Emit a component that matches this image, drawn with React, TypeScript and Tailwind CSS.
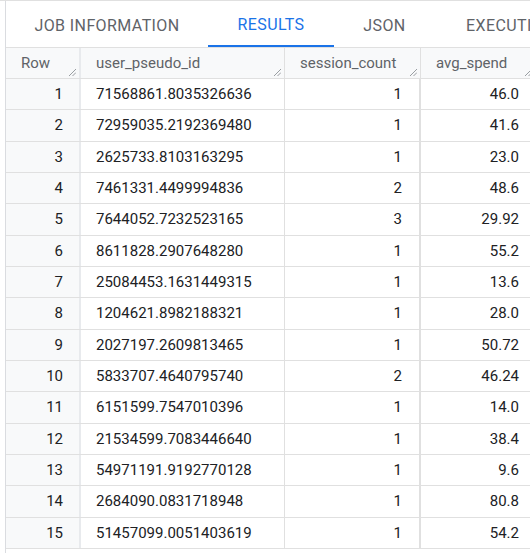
import React from "react";

const rows: [number, string, number, string][] = [
  [1, "71568861.8035326636", 1, "46.0"],
  [2, "72959035.2192369480", 1, "41.6"],
  [3, "2625733.8103163295", 1, "23.0"],
  [4, "7461331.4499994836", 2, "48.6"],
  [5, "7644052.7232523165", 3, "29.92"],
  [6, "8611828.2907648280", 1, "55.2"],
  [7, "25084453.1631449315", 1, "13.6"],
  [8, "1204621.8982188321", 1, "28.0"],
  [9, "2027197.2609813465", 1, "50.72"],
  [10, "5833707.4640795740", 2, "46.24"],
  [11, "6151599.7547010396", 1, "14.0"],
  [12, "21534599.7083446640", 1, "38.4"],
  [13, "54971191.9192770128", 1, "9.6"],
  [14, "2684090.0831718948", 1, "80.8"],
  [15, "51457099.0051403619", 1, "54.2"],
];

function Grip() {
  return (
    <svg
      className="absolute right-[3px] bottom-[2px]"
      width="8"
      height="8"
      viewBox="0 0 8 8"
    >
      <line x1="8" y1="1" x2="1" y2="8" stroke="#80868b" strokeWidth="0.8" />
      <line x1="8" y1="4.5" x2="4.5" y2="8" stroke="#80868b" strokeWidth="0.8" />
    </svg>
  );
}

export default function App() {
  return (
    <div
      className="w-[530px] h-[553px] overflow-hidden bg-white border-t border-[#e0e0e0]"
      style={{ fontFamily: "Roboto, 'Liberation Sans', sans-serif" }}
    >
      <div className="ml-[5px] h-full border-l border-[#dadce0]">
        {/* Tabs */}
        <div className="flex h-[46px] text-[16px] font-normal tracking-[0.4px] whitespace-nowrap">
          <div className="w-[202px] shrink-0 pt-[3px] flex items-center justify-center text-[#5f6368]">
            JOB INFORMATION
          </div>
          <div className="w-[126px] shrink-0 pt-[3px] flex items-center justify-center text-[#1a73e8] border-b-2 border-[#1a73e8]">
            RESULTS
          </div>
          <div className="w-[101px] shrink-0 pt-[3px] flex items-center justify-center text-[#5f6368]">
            JSON
          </div>
          <div className="shrink-0 pl-[31px] pt-[3px] flex items-center text-[#5f6368]">
            EXECUTION DETAILS
          </div>
        </div>
        {/* Table */}
        <div className="border-t border-[#e0e0e0] text-[15px] whitespace-nowrap">
          <div className="flex h-[31px] bg-[#f8f9fa] border-b border-[#e0e0e0] text-[#5f6368]">
            <div className="relative w-[75px] shrink-0 pl-[15px] flex items-center border-r-2 border-[#e8eaed]">
              Row
              <Grip />
            </div>
            <div className="relative w-[204px] shrink-0 pl-[15px] flex items-center border-r border-[#e0e0e0]">
              user_pseudo_id
              <Grip />
            </div>
            <div className="relative w-[136px] shrink-0 pl-[15px] flex items-center border-r border-[#e0e0e0]">
              session_count
              <Grip />
            </div>
            <div className="relative w-[114px] shrink-0 pl-[15px] flex items-center">
              avg_spend
              <Grip />
            </div>
          </div>
          {rows.map(([n, id, c, s]) => (
            <div
              key={n}
              className="flex h-[31.33px] border-b border-[#e0e0e0] text-[#202124]"
            >
              <div className="w-[75px] shrink-0 bg-[#f8f9fa] pr-[16px] flex items-center justify-end border-r-2 border-[#e8eaed]">
                {n}
              </div>
              <div className="w-[204px] shrink-0 pl-[15px] flex items-center border-r border-[#e0e0e0]">
                {id}
              </div>
              <div className="w-[136px] shrink-0 pr-[17px] flex items-center justify-end border-r-2 border-[#e0e0e0]">
                {c}
              </div>
              <div className="w-[114px] shrink-0 pr-[16px] flex items-center justify-end">
                {s}
              </div>
            </div>
          ))}
        </div>
      </div>
    </div>
  );
}
